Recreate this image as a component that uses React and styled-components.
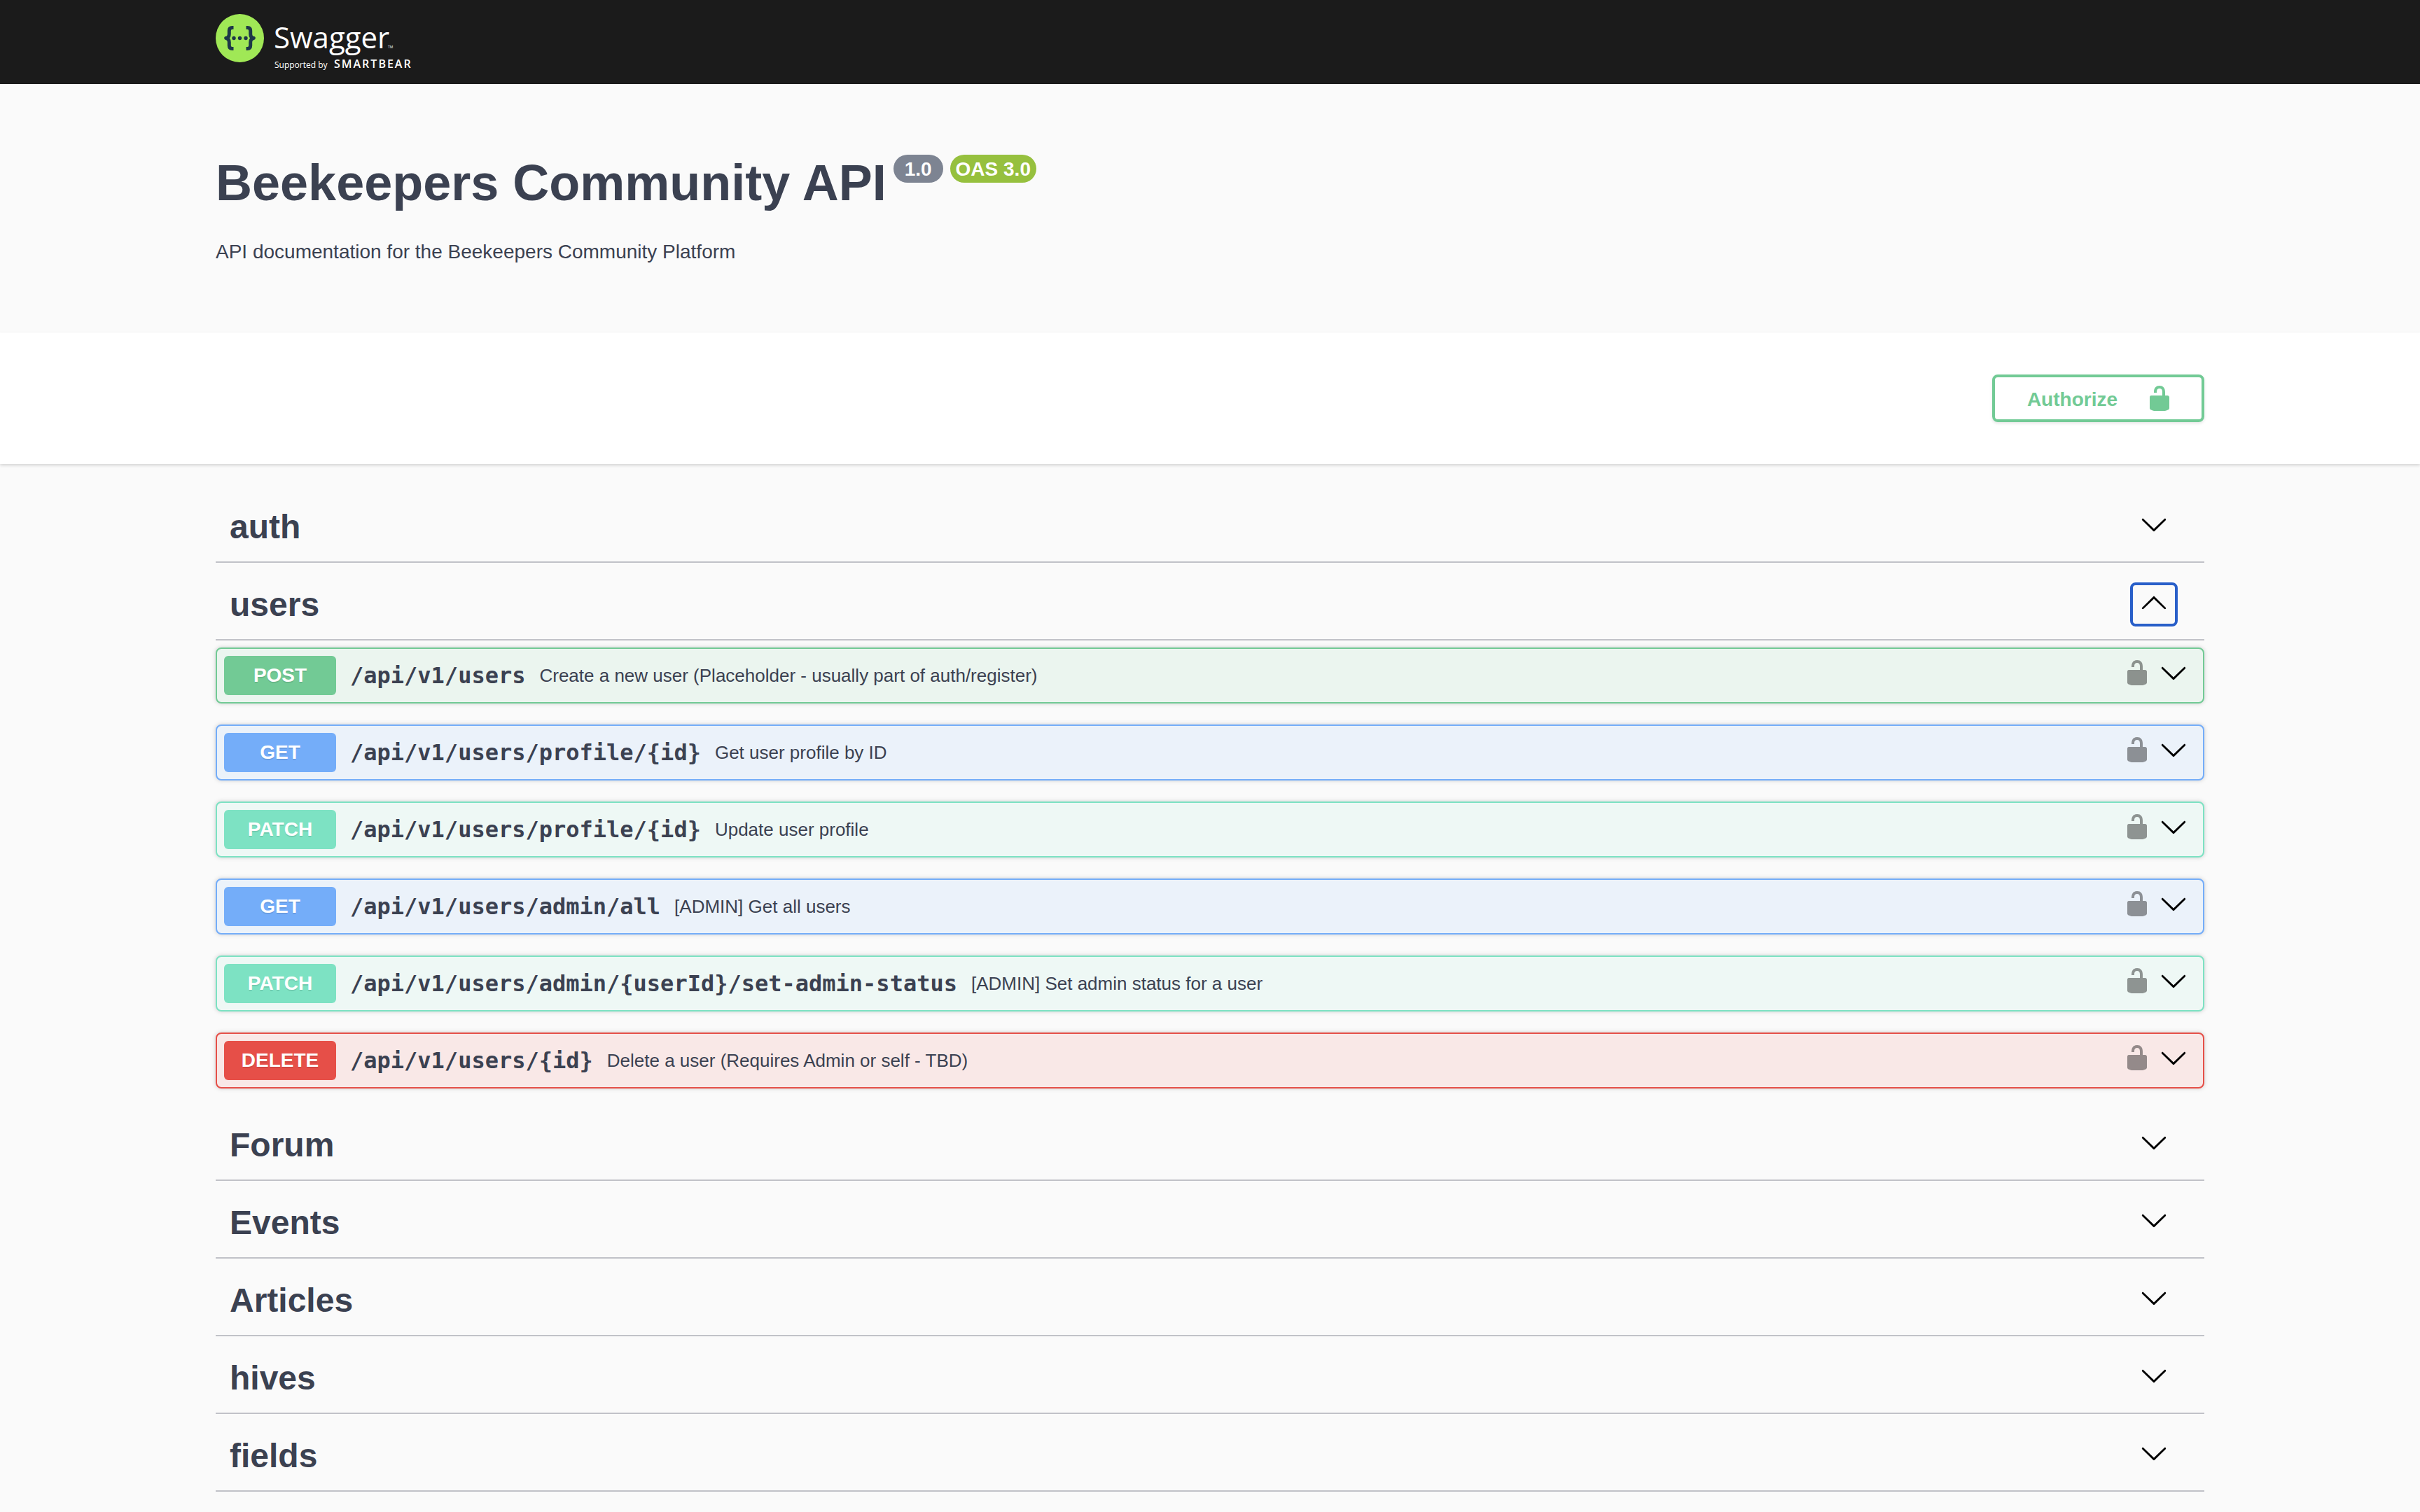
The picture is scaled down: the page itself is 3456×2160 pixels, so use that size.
import React, { useState } from "react";
import styled, { createGlobalStyle } from "styled-components";

const GlobalStyle = createGlobalStyle`
  *, *::before, *::after { box-sizing: border-box; }
  body {
    margin: 0;
    background: #fafafa;
    color: #3b4151;
    font-family: "Liberation Sans", Arial, Helvetica, sans-serif;
  }
  h1, h2, p, ul { margin: 0; padding: 0; }
  button { font-family: inherit; color: inherit; cursor: pointer; }
`;

const METHODS = {
  POST: { main: "#72ca95", tint: "#ebf5ef" },
  GET: { main: "#74adf9", tint: "#ebf2fa" },
  PATCH: { main: "#7de2c3", tint: "#eef8f5" },
  DELETE: { main: "#e64f48", tint: "#f9e8e7" },
};

const SECTIONS = [
  { name: "auth", operations: [] },
  {
    name: "users",
    operations: [
      { method: "POST", path: "/api/v1/users", summary: "Create a new user (Placeholder - usually part of auth/register)" },
      { method: "GET", path: "/api/v1/users/profile/{id}", summary: "Get user profile by ID" },
      { method: "PATCH", path: "/api/v1/users/profile/{id}", summary: "Update user profile" },
      { method: "GET", path: "/api/v1/users/admin/all", summary: "[ADMIN] Get all users" },
      { method: "PATCH", path: "/api/v1/users/admin/{userId}/set-admin-status", summary: "[ADMIN] Set admin status for a user" },
      { method: "DELETE", path: "/api/v1/users/{id}", summary: "Delete a user (Requires Admin or self - TBD)" },
    ],
  },
  { name: "Forum", operations: [] },
  { name: "Events", operations: [] },
  { name: "Articles", operations: [] },
  { name: "hives", operations: [] },
  { name: "fields", operations: [] },
];

const Wrapper = styled.div`
  width: 100%;
  max-width: 2920px;
  margin: 0 auto;
  padding: 0 40px;
`;

const TopBar = styled.header`
  background: #1b1b1b;
  padding: 20px 0 10px;
`;

const LogoLink = styled.a`
  display: inline-flex;
  vertical-align: top;
  text-decoration: none;
`;

const Info = styled.section`
  padding: 100px 0 94px;
`;

const TitleRow = styled.div`
  display: flex;
  align-items: flex-start;
  gap: 10px;
`;

const Title = styled.h1`
  font-size: 72px;
  line-height: 82px;
  font-weight: 700;
`;

const Badge = styled.span`
  display: block;
  height: 40px;
  margin-top: 1px;
  padding: 0 ${(p) => p.$pad}px;
  border-radius: 20px;
  background: ${(p) => p.$color};
  color: #fff;
  font-size: 28px;
  line-height: 42px;
  font-weight: 700;
`;

const Description = styled.p`
  margin-top: 36px;
  font-size: 28px;
  line-height: 43px;
`;

const SchemeBar = styled.section`
  padding: 60px 0;
  background: #fff;
  box-shadow: 0 2px 4px rgba(0, 0, 0, 0.15);
`;

const SchemeInner = styled(Wrapper)`
  display: flex;
  justify-content: flex-end;
`;

const AuthorizeButton = styled.button`
  display: flex;
  align-items: center;
  gap: 40px;
  height: 68px;
  padding: 0 40px 0 46px;
  border: 4px solid #72ca95;
  border-radius: 8px;
  background: transparent;
  box-shadow: 0 2px 4px rgba(0, 0, 0, 0.1);
  color: #72ca95;
  font-size: 28px;
  line-height: 32px;
  font-weight: 700;
`;

const AuthorizeLabel = styled.span`
  padding-top: 4px;
`;

const Sections = styled.main`
  padding: 40px 0;
`;

const TagHeader = styled.div`
  display: flex;
  align-items: center;
  justify-content: space-between;
  height: 101px;
  margin-bottom: 10px;
  padding: 0 38px 0 20px;
  border-bottom: 2px solid #c1c2c8;
`;

const TagName = styled.h2`
  font-size: 48px;
  line-height: 58px;
  font-weight: 700;
`;

const ExpandButton = styled.button`
  display: flex;
  padding: ${(p) => (p.$active ? "4px 10px 11px" : "8px 14px 15px")};
  border: ${(p) => (p.$active ? "4px solid #295fc9" : "0")};
  border-radius: 8px;
  background: none;
  box-shadow: ${(p) => (p.$active ? "0 0 0 2px #fff" : "none")};
  color: #000;
`;

const OperationList = styled.ul`
  display: grid;
  gap: 30px;
  margin-bottom: 31px;
  list-style: none;
`;

const Operation = styled.li`
  display: flex;
  align-items: center;
  height: 80px;
  padding: 0 22px 0 10px;
  border: 2px solid ${(p) => p.$tone.main};
  border-radius: 8px;
  background: ${(p) => p.$tone.tint};
  box-shadow: 0 0 6px rgba(0, 0, 0, 0.19);
`;

const SummaryButton = styled.button`
  display: flex;
  flex: 1;
  align-items: center;
  gap: 20px;
  min-width: 0;
  padding: 0;
  border: 0;
  background: none;
  text-align: left;
`;

const Method = styled.span`
  width: 160px;
  border-radius: 6px;
  background: ${(p) => p.$color};
  color: #fff;
  font-size: 28px;
  line-height: 56px;
  font-weight: 700;
  text-align: center;
  text-shadow: 0 2px 0 rgba(0, 0, 0, 0.1);
`;

const Path = styled.span`
  font-family: "DejaVu Sans Mono", monospace;
  font-size: 32px;
  line-height: 40px;
  font-weight: 700;
`;

const Summary = styled.span`
  font-size: 26px;
  line-height: 32px;
`;

const Actions = styled.div`
  display: flex;
  gap: 12px;
  padding-bottom: 8px;
`;

const IconButton = styled.button`
  display: flex;
  padding: 0;
  border: 0;
  background: none;
  color: #000;
  opacity: ${(p) => (p.$dim ? 0.4 : 1)};
`;

function Logo() {
  return (
    <svg width="300" height="90" viewBox="0 0 300 90" role="img" aria-label="Swagger, supported by SmartBear">
      <circle cx="34.5" cy="34.5" r="34.5" fill="#a0e856" />
      <g fill="none" stroke="#1d3748" strokeWidth="5" strokeLinejoin="round">
        <path d="M25.5 19.5h-2c-3 0-4.200 1.400-4.200 4.400v4.600c0 3.600-1.300 5.400-4.600 6 3.300.6 4.600 2.400 4.600 6v4.600c0 3 1.200 4.400 4.200 4.400h2" />
        <path d="M43.500 19.500h2c3 0 4.200 1.400 4.200 4.400v4.600c0 3.600 1.300 5.400 4.600 6-3.300.6-4.600 2.400-4.600 6v4.600c0 3-1.200 4.400-4.200 4.400h-2" />
      </g>
      <g fill="#1d3748">
        <circle cx="26" cy="34.500" r="2.700" />
        <circle cx="34.500" cy="34.500" r="2.700" />
        <circle cx="43" cy="34.500" r="2.700" />
      </g>
      <g fill="#fff" fontFamily='"Open Sans", "Noto Sans", sans-serif'>
        <text x="83" y="49" fontSize="42">Swagger</text>
        <text x="246" y="49" fontSize="5">TM</text>
        <text x="84" y="77" fontSize="12">Supported by</text>
        <text x="169" y="77" fontSize="16" fontWeight="600" letterSpacing="2">SMARTBEAR</text>
      </g>
    </svg>
  );
}

function Chevron({ up }) {
  return (
    <svg width="40" height="40" viewBox="0 0 20 20" fill="currentColor" aria-hidden="true">
      {up ? (
        <path d="M17.418 14.908c.272.268.709.268.979 0s.271-.701 0-.969l-7.908-7.830c-.270-.268-.707-.268-.979 0l-7.908 7.830c-.270.268-.270.701 0 .969s.709.268.979 0L10 7.767l7.418 7.141z" />
      ) : (
        <path d="M17.418 6.109c.272-.268.709-.268.979 0s.271.701 0 .969l-7.908 7.830c-.270.268-.707.268-.979 0l-7.908-7.830c-.270-.268-.270-.701 0-.969s.709-.268.979 0L10 13.250l7.418-7.141z" />
      )}
    </svg>
  );
}

function Unlocked() {
  return (
    <svg width="40" height="40" viewBox="0 0 20 20" fill="currentColor" aria-hidden="true">
      <path d="M15.8 8H14V5.600C14 2.703 12.665 1 10 1 7.334 1 6 2.703 6 5.600V6h2v-.801C8 3.754 8.797 3 10 3c1.203 0 2 .754 2 2.199V8H4c-.553 0-1 .646-1 1.199V17c0 .549.428 1.139.951 1.307l1.197.387C5.672 18.861 6.550 19 7.100 19h5.800c.549 0 1.428-.139 1.951-.307l1.196-.387c.524-.167.953-.757.953-1.306V9.199C17 8.646 16.352 8 15.800 8z" />
    </svg>
  );
}

function OperationRow({ method, path, summary }) {
  const tone = METHODS[method];
  return (
    <Operation $tone={tone}>
      <SummaryButton type="button">
        <Method $color={tone.main}>{method}</Method>
        <Path>{path}</Path>
        <Summary>{summary}</Summary>
      </SummaryButton>
      <Actions>
        <IconButton type="button" $dim aria-label="Authorization button unlocked">
          <Unlocked />
        </IconButton>
        <IconButton type="button" aria-label="Expand operation">
          <Chevron />
        </IconButton>
      </Actions>
    </Operation>
  );
}

export default function App() {
  const [open, setOpen] = useState("users");
  return (
    <>
      <GlobalStyle />
      <TopBar>
        <Wrapper>
          <LogoLink href="#">
            <Logo />
          </LogoLink>
        </Wrapper>
      </TopBar>
      <Info>
        <Wrapper>
          <TitleRow>
            <Title>Beekeepers Community API</Title>
            <Badge $color="#7d8492" $pad={16}>1.0</Badge>
            <Badge $color="#96c03e" $pad={8}>OAS 3.0</Badge>
          </TitleRow>
          <Description>API documentation for the Beekeepers Community Platform</Description>
        </Wrapper>
      </Info>
      <SchemeBar>
        <SchemeInner>
          <AuthorizeButton type="button">
            <AuthorizeLabel>Authorize</AuthorizeLabel>
            <Unlocked />
          </AuthorizeButton>
        </SchemeInner>
      </SchemeBar>
      <Sections>
        <Wrapper>
          {SECTIONS.map(({ name, operations }) => {
            const active = open === name;
            return (
              <section key={name}>
                <TagHeader>
                  <TagName>{name}</TagName>
                  <ExpandButton
                    type="button"
                    $active={active}
                    aria-expanded={active}
                    aria-label={`${active ? "Collapse" : "Expand"} ${name}`}
                    onClick={() => setOpen(active ? null : name)}
                  >
                    <Chevron up={active} />
                  </ExpandButton>
                </TagHeader>
                {active && operations.length > 0 && (
                  <OperationList>
                    {operations.map((op) => (
                      <OperationRow key={op.method + op.path} {...op} />
                    ))}
                  </OperationList>
                )}
              </section>
            );
          })}
        </Wrapper>
      </Sections>
    </>
  );
}
